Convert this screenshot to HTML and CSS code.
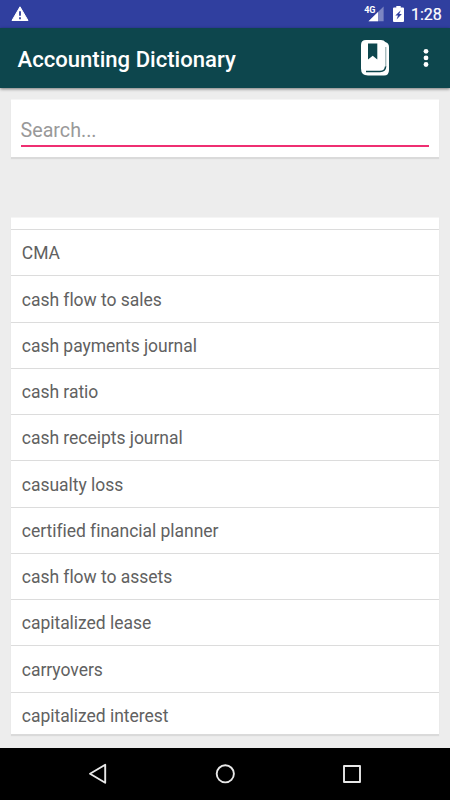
FILE: index.html
```html
<!DOCTYPE html>
<html lang="en">
<head>
<meta charset="utf-8">
<title>Accounting Dictionary</title>
<link rel="stylesheet" href="styles.css">
</head>
<body>
<div class="status">
  <svg class="warn" width="18" height="16" viewBox="0 0 18 16"><path d="M9 0.8L17 14.500H1Z" fill="#fff" stroke="#fff" stroke-width="1" stroke-linejoin="round"/><path d="M9 5.200v4.600M9 11.200v2" stroke="#303f9f" stroke-width="1.800"/></svg>
  <div class="signal">
    <span class="net">4G</span>
    <svg width="16" height="16" viewBox="0 0 16 16"><path d="M15.600 0.500V15.300H.5Z" fill="#7d86c2"/><path d="M10 6.100V15.300H.5Z" fill="#fff"/></svg>
  </div>
  <svg class="battery" width="11" height="16" viewBox="0 0 11 16"><path d="M3.300 0h4.400v1.500H10q1 0 1 1V15q0 1-1 1H1q-1 0-1-1V2.500q0-1 1-1h2.300Z" fill="#fff"/><path d="M7.800 4.300L2.300 9.400H5L3.600 13.400L8.900 8.100H6.200Z" fill="#303f9f"/></svg>
  <span class="time">1:28</span>
</div>
<header class="appbar">
  <h1>Accounting Dictionary</h1>
  <svg class="book" width="30" height="38" viewBox="0 0 30 38"><path d="M6 1H21Q24 1 25.300 3Q29 4 29 8V31Q29 36.500 24 36.500H8Q1 36.500 1 29.500V6Q1 1 6 1Z" fill="#fff"/><path d="M6 32.400H20Q25.300 32.400 25.600 27.500" fill="none" stroke="#0d464d" stroke-width="1.500"/><path d="M25.800 28V8" fill="none" stroke="#0d464d" stroke-width=".5"/><path d="M8 4.500h9.300V20.500L12.700 16.700L8 20.500Z" fill="#0d464d"/></svg>
  <svg class="more" width="6" height="20" viewBox="0 0 6 20" fill="#fff"><circle cx="3" cy="3.300" r="2.400"/><circle cx="3" cy="9.900" r="2.400"/><circle cx="3" cy="16.500" r="2.400"/></svg>
</header>
<main>
  <section class="card search"><div class="field">Search...</div></section>
  <section class="card list">
    <ul>
      <li>CMA</li>
      <li>cash flow to sales</li>
      <li>cash payments journal</li>
      <li>cash ratio</li>
      <li>cash receipts journal</li>
      <li>casualty loss</li>
      <li>certified financial planner</li>
      <li>cash flow to assets</li>
      <li>capitalized lease</li>
      <li>carryovers</li>
      <li>capitalized interest</li>
    </ul>
  </section>
</main>
<nav class="navbar">
  <svg width="20" height="22" viewBox="0 0 20 22"><path d="M17.200 1.800V19.800L2 10.800Z"/></svg>
  <svg width="20" height="22" viewBox="0 0 20 22"><circle cx="10.300" cy="10.800" r="8.600"/></svg>
  <svg width="20" height="22" viewBox="0 0 20 22"><rect x="2" y="3" width="16" height="16"/></svg>
</nav>
</body>
</html>
```

FILE: styles.css
```css
* { box-sizing: border-box; }
body {
  margin: 0;
  width: 450px;
  height: 800px;
  overflow: hidden;
  display: flex;
  flex-direction: column;
  background: #ededed;
  font-family: Roboto, sans-serif;
}
.status {
  height: 28px;
  flex: none;
  display: flex;
  align-items: flex-start;
  padding: 6px 9px 0 11px;
  background: #303f9f;
  color: #fff;
}
.signal { display: flex; margin-left: auto; }
.signal svg { margin-left: -7px; }
.net { font-size: 9px; line-height: 9px; font-weight: 700; letter-spacing: -.3px; }
.battery { margin-left: 9px; }
.time { width: 30px; margin-left: 7px; font-size: 16px; line-height: 17px; font-weight: 400; -webkit-text-stroke: .2px #fff; }
.appbar {
  height: 60px;
  flex: none;
  display: flex;
  align-items: center;
  padding: 0 21px 0 17.500px;
  background: #0d464d;
  color: #fff;
  box-shadow: 0 1px 3px rgba(0, 0, 0, .5);
}
h1 { margin: 2px auto 0 0; font-size: 22.100px; line-height: 30px; font-weight: 500; }
.more { margin-left: 33px; }
main { flex: 1; min-height: 0; padding: 12px 11px 0; }
.card { background: #fff; box-shadow: 0 2px 1px #dadada, 0 -1px 0 #f5f5f5; }
.search { height: 57px; padding: 15px 10px 0 9.500px; }
.field {
  height: 32px;
  border-bottom: 2px solid #ef2f72;
  font-size: 19.700px;
  line-height: 31px;
  color: #999;
}
.list { margin-top: 61px; height: 516px; padding-top: 11px; }
ul { margin: 0; padding: 0; height: 505px; overflow: hidden; list-style: none; }
li {
  height: 46.270px;
  border-top: 1px solid #dcdcdc;
  padding: .28px 0 0 10.800px;
  font-size: 17.500px;
  letter-spacing: -.03px;
  font-variant-ligatures: common-ligatures;
  line-height: 47px;
  color: #616161;
}
.navbar {
  height: 52px;
  flex: none;
  display: flex;
  justify-content: center;
  align-items: center;
  gap: 107px;
  background: #000;
}
.navbar svg { fill: none; stroke: #e8e8e8; stroke-width: 1.900; stroke-linejoin: round; }
```
